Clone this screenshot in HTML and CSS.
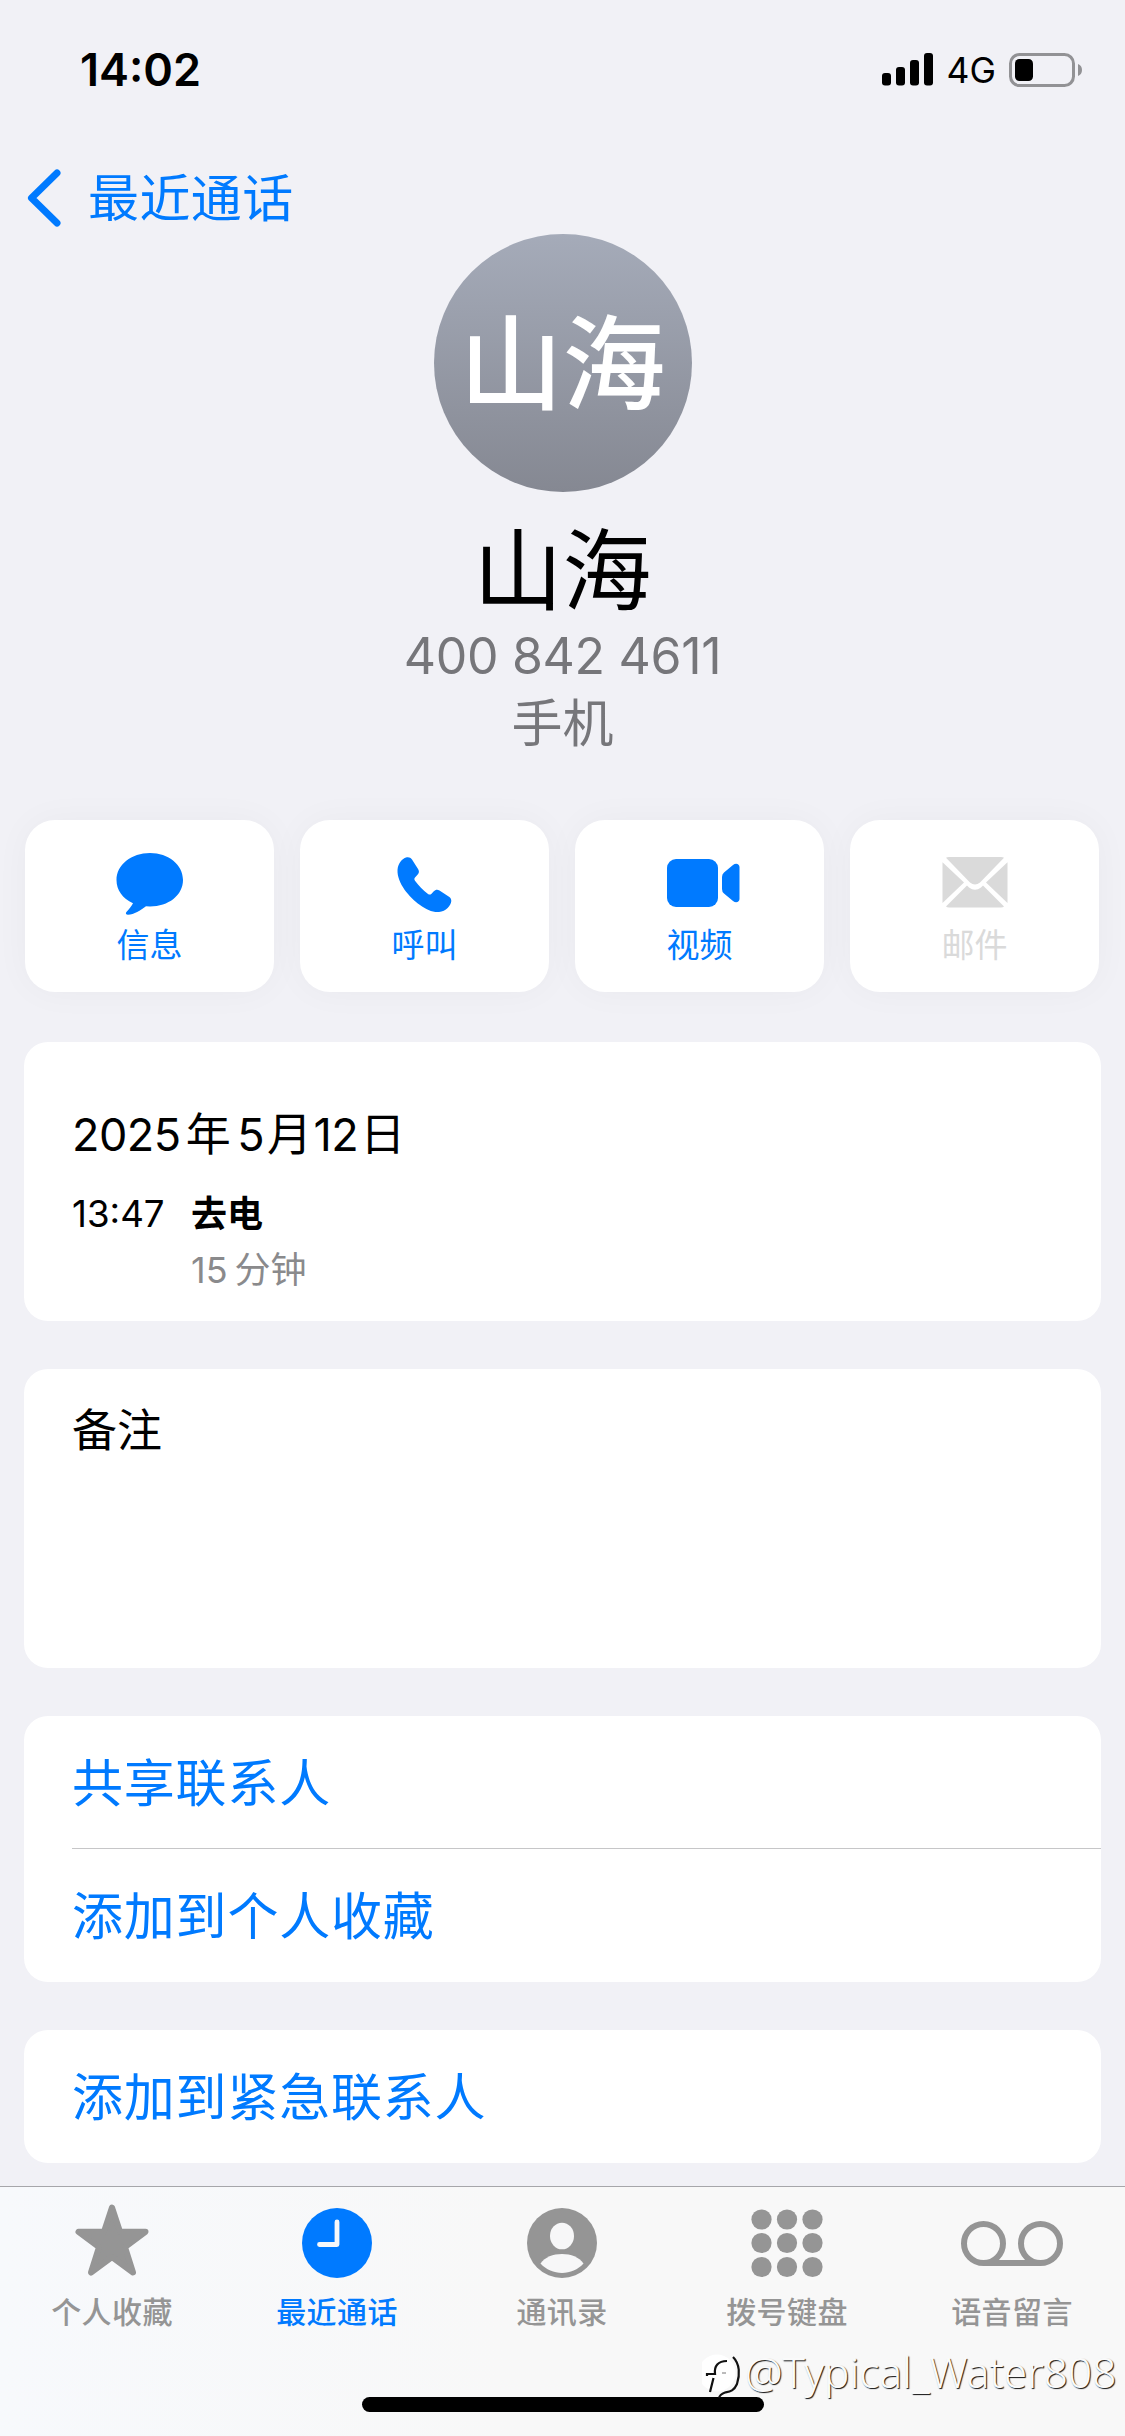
FILE: index.html
```html
<!DOCTYPE html>
<html lang="zh-CN">
<head>
<meta charset="utf-8">
<title>山海</title>
<link rel="stylesheet" href="styles.css">
</head>
<body>
<div class="screen">
  <header class="status">
    <span class="time">14:02</span>
    <div class="status-right">
      <svg class="signal" width="51" height="33" viewBox="0 0 51 33"><rect x="0" y="20" width="9" height="12.500" rx="3"/><rect x="14" y="14" width="9" height="18.500" rx="3"/><rect x="28" y="7" width="9" height="25.500" rx="3"/><rect x="42" y="0" width="9" height="32.500" rx="3"/></svg>
      <span class="network">4G</span>
      <svg class="battery" width="74" height="34" viewBox="0 0 74 34"><rect x="1.500" y="1.500" width="63" height="31" rx="9" fill="none" stroke="#929295" stroke-width="3"/><rect x="6" y="6" width="18" height="22" rx="4.500"/><path d="M69 11a6.500 6.500 0 0 1 0 12z" fill="#929295"/></svg>
    </div>
  </header>
  <nav class="back">
    <svg width="35" height="58" viewBox="0 0 35 58"><path d="M30 4 4.500 29 30 54" fill="none" stroke="#007aff" stroke-width="7" stroke-linecap="round" stroke-linejoin="round"/></svg>
    <span>最近通话</span>
  </nav>
  <section class="profile">
    <div class="avatar">山海</div>
    <h1 class="name">山海</h1>
    <div class="number">400 842 4611</div>
    <div class="kind">手机</div>
  </section>
  <section class="actions">
    <div class="action">
      <svg width="68" height="62" viewBox="0 0 68 62"><path d="M34 0C52.500 0 67 11.800 67 27S52.500 53.500 34 53.500L30 53.200C24.500 57.500 18 61.300 12 61.800 9.800 61.800 9.400 60.200 10.400 59 12.800 56.400 15.500 53.200 17 50.200 6.500 45.500.500 37 .500 27 .500 11.800 15.500 0 34 0z"/></svg>
      <span>信息</span>
    </div>
    <div class="action">
      <svg class="phone" width="68" height="62" viewBox="0 0 68 62"><path d="M17 4.500C13.500 5.500 9 10 8.500 17 8 30 20 44 31 52 37 56.500 43.500 59.500 50 59 57 58.500 62 52.500 62.300 48 62.300 46 61.500 44.700 60 43.700L50.500 37.500C48.200 36.100 46.300 36.700 44.800 38.300L42.300 40.900C41.300 41.800 40.200 41.800 39 40.900 34 37.100 29.500 32.500 26 27.700 25.100 26.400 25.200 25.500 26 24.500L28.700 21.500C30.200 19.800 30.300 18.200 29.200 16.300L23 6.500C21.500 4.400 19.500 3.800 17 4.500z"/></svg>
      <span>呼叫</span>
    </div>
    <div class="action">
      <svg class="video" width="73" height="62" viewBox="0 0 73 62"><rect x="0" y="6" width="51" height="48" rx="9"/><path d="M55 24q0-3 2-4.500L66 12c3-2.500 6.500-1 6.500 2v32c0 3-3.500 4.500-6.500 2l-9-7.500q-2-1.500-2-4.500z"/></svg>
      <span>视频</span>
    </div>
    <div class="action disabled">
      <svg width="68" height="62" viewBox="0 0 68 62"><path d="M5 4.700Q6 4 8 4H60Q62 4 63 4.700L39 29.500Q34 33.500 29 29.500zM1.500 9.200 23 29.500 1.500 50zM66.500 9.200 45 29.500 66.500 50zM26 32.500 28 34.500Q34 39 40 34.500L42 32.500 63 53.500Q62 54.500 60 54.500H8Q6 54.500 5 53.500z"/></svg>
      <span>邮件</span>
    </div>
  </section>
  <main class="cards">
    <section class="card log">
      <div class="date">2025<i class="year">年</i>5<i class="month">月</i>12<i class="day">日</i></div>
      <div class="call">
        <span class="at">13:47</span>
        <div class="detail"><div class="direction">去电</div><div class="duration">15<i>分钟</i></div></div>
      </div>
    </section>
    <section class="card notes">备注</section>
    <section class="card">
      <div class="row divided">共享联系人</div>
      <div class="row">添加到个人收藏</div>
    </section>
    <section class="card"><div class="row">添加到紧急联系人</div></section>
  </main>
  <footer class="tabbar">
    <div class="tab">
      <svg width="78" height="76" viewBox="0 0 78 76"><path d="M39 4.500 47 28.800H72.500L52 44.200 60 69.500 39 54 18 69.500 26 44.200 5.500 28.800H31z" stroke="currentColor" stroke-width="6" stroke-linejoin="round"/></svg>
      <span>个人收藏</span>
    </div>
    <div class="tab active">
      <svg width="78" height="76" viewBox="0 0 78 76"><circle cx="39" cy="40" r="35"/><path d="M39 19V41.500H21.500" fill="none" stroke="#f7f8fa" stroke-width="4.800" stroke-linecap="round" stroke-linejoin="round"/></svg>
      <span>最近通话</span>
    </div>
    <div class="tab">
      <svg width="78" height="76" viewBox="0 0 78 76"><circle cx="39" cy="40" r="35"/><ellipse cx="39" cy="33" rx="12" ry="13.300" fill="#f7f7f8"/><path d="M17.500 60.500C22 54 30 51 39 51S56 54 60.500 60.500C55 66.500 47 70 39 70S23 66.500 17.500 60.500z" fill="#f7f7f8"/></svg>
      <span>通讯录</span>
    </div>
    <div class="tab">
      <svg width="78" height="76" viewBox="0 0 78 76"><g><circle cx="13.500" cy="16.500" r="10.100"/><circle cx="39" cy="16.500" r="10.100"/><circle cx="64.500" cy="16.500" r="10.100"/><circle cx="13.500" cy="40" r="10.100"/><circle cx="39" cy="40" r="10.100"/><circle cx="64.500" cy="40" r="10.100"/><circle cx="13.500" cy="64" r="10.100"/><circle cx="39" cy="64" r="10.100"/><circle cx="64.500" cy="64" r="10.100"/></g></svg>
      <span>拨号键盘</span>
    </div>
    <div class="tab">
      <svg width="104" height="76" viewBox="0 0 104 76"><g fill="none" stroke="currentColor" stroke-width="6"><circle cx="23.500" cy="40.500" r="19.500"/><circle cx="80.500" cy="40.500" r="19.500"/><path d="M23.500 60H80.500"/></g></svg>
      <span>语音留言</span>
    </div>
  </footer>
  <div class="home"></div>
  <div class="watermark">
    <svg width="43" height="46" viewBox="0 0 43 46"><circle cx="15" cy="20" r="18.500" fill="#fff"/><path d="M8 39 11.500 25M5 23V21H13C12 13 16 8 25 8M31 4C38 11 38 22 35 31 32 38 28 38.500 23 39.500 19 41 17.500 42.500 17 45" fill="none" stroke="#111" stroke-width="2.200"/><path d="M20 20H24" stroke="#777" stroke-width="1"/></svg>
    <span>@Typical_Water808</span>
  </div>
</div>
</body>
</html>
```
FILE: styles.css
```css
* { box-sizing: border-box; }
body { margin: 0; background: #f1f1f6; }
svg { display: block; fill: currentColor; flex: none; }
i { font-style: normal; }
.screen {
  position: relative;
  width: 1125px;
  height: 2436px;
  overflow: hidden;
  display: flex;
  flex-direction: column;
  font-family: Inter, "Noto Sans CJK SC", sans-serif;
  color: #000;
  white-space: nowrap;
}
.status {
  height: 139px;
  padding: 0 42px 0 80px;
  display: flex;
  justify-content: space-between;
  align-items: center;
}
.time { font-size: 45px; font-weight: 600; }
.status-right { display: flex; align-items: center; }
.network { font-size: 35.5px; margin: 2px 13px 0 14px; line-height: 40px; }
.back {
  height: 95px;
  padding: 30px 0 0 27px;
  display: flex;
  align-items: flex-start;
  color: #007aff;
  font-size: 51px;
  line-height: 60px;
  letter-spacing: .4px;
}
.back span { margin-left: 26px; }
.profile {
  height: 586px;
  display: flex;
  flex-direction: column;
  align-items: center;
}
.avatar {
  width: 258px;
  height: 258px;
  border-radius: 50%;
  background: linear-gradient(#a5abb9, #858892);
  color: #fff;
  font-size: 103px;
  font-weight: 500;
  line-height: 262px;
  text-align: center;
}
.name { margin: 19px 0 0; font-size: 89px; font-weight: 400; line-height: 120px; }
.number { font-size: 50px; line-height: 66px; margin-top: -8px; letter-spacing: -.3px; color: #76767a; }
.kind { font-size: 51px; line-height: 66px; margin-top: 2px; color: #76767a; }
.actions {
  height: 222px;
  padding: 0 26px 0 25px;
  display: grid;
  grid-template-columns: repeat(4, 1fr);
  gap: 26px;
}
.action {
  height: 172px;
  padding-top: 33px;
  display: flex;
  flex-direction: column;
  align-items: center;
  border-radius: 30px;
  background: #fff;
  box-shadow: 0 0 36px rgba(0, 0, 0, .035);
  color: #007aff;
  font-size: 33px;
  font-weight: 400;
  line-height: 40px;
}
.action span { margin-top: 10px; }
.phone { margin-right: 3px; }
.video { margin-left: 7px; }
.disabled { color: #dadada; }
.cards {
  height: 1144px;
  padding: 0 24px;
  display: flex;
  flex-direction: column;
  gap: 48px;
}
.card { background: #fff; border-radius: 24px; }
.log { height: 279px; padding: 63px 48px 0; }
.date { font-size: 45px; line-height: 60px; letter-spacing: -.5px; }
.year { margin: 0 7px 0 5px; }
.month { margin: 0 2px 0 3px; }
.day { margin-left: 2px; }
.call { display: flex; margin-top: 21px; font-size: 36px; }
.at { width: 119px; line-height: 56px; font-size: 36.7px; }
.direction { font-weight: 700; line-height: 56px; }
.duration { color: #8a8a8c; line-height: 56px; }
.duration i { margin-left: 7px; }
.notes { height: 299px; padding: 30px 48px 0; font-size: 45px; line-height: 64px; }
.row {
  height: 133px;
  margin-left: 48px;
  padding-top: 2px;
  font-size: 51px;
  line-height: 132px;
  letter-spacing: .8px;
  color: #007aff;
}
.divided { border-bottom: 1px solid #c6c6c8; }
.tabbar {
  height: 250px;
  padding-top: 16px;
  border-top: 1px solid #a6a6aa;
  background: linear-gradient(90deg, #f7f9fc, #f8f8f8 45%);
  display: grid;
  grid-template-columns: repeat(5, 1fr);
}
.tab {
  display: flex;
  flex-direction: column;
  align-items: center;
  padding-right: 1px;
  color: #959595;
  font-size: 30px;
  font-weight: 500;
  line-height: 40px;
}
.tab span { margin-top: 13px; letter-spacing: .4px; }
.active { color: #007aff; }
.home {
  position: absolute;
  left: 362px;
  top: 2397px;
  width: 402px;
  height: 15px;
  border-radius: 8px;
  background: #000;
}
.watermark {
  position: absolute;
  left: 702px;
  top: 2353px;
  display: flex;
  color: #fafafa;
  font: 300 42.3px/38px "Noto Sans", sans-serif;
  text-shadow: 1px 1px 1px #111;
}
```
